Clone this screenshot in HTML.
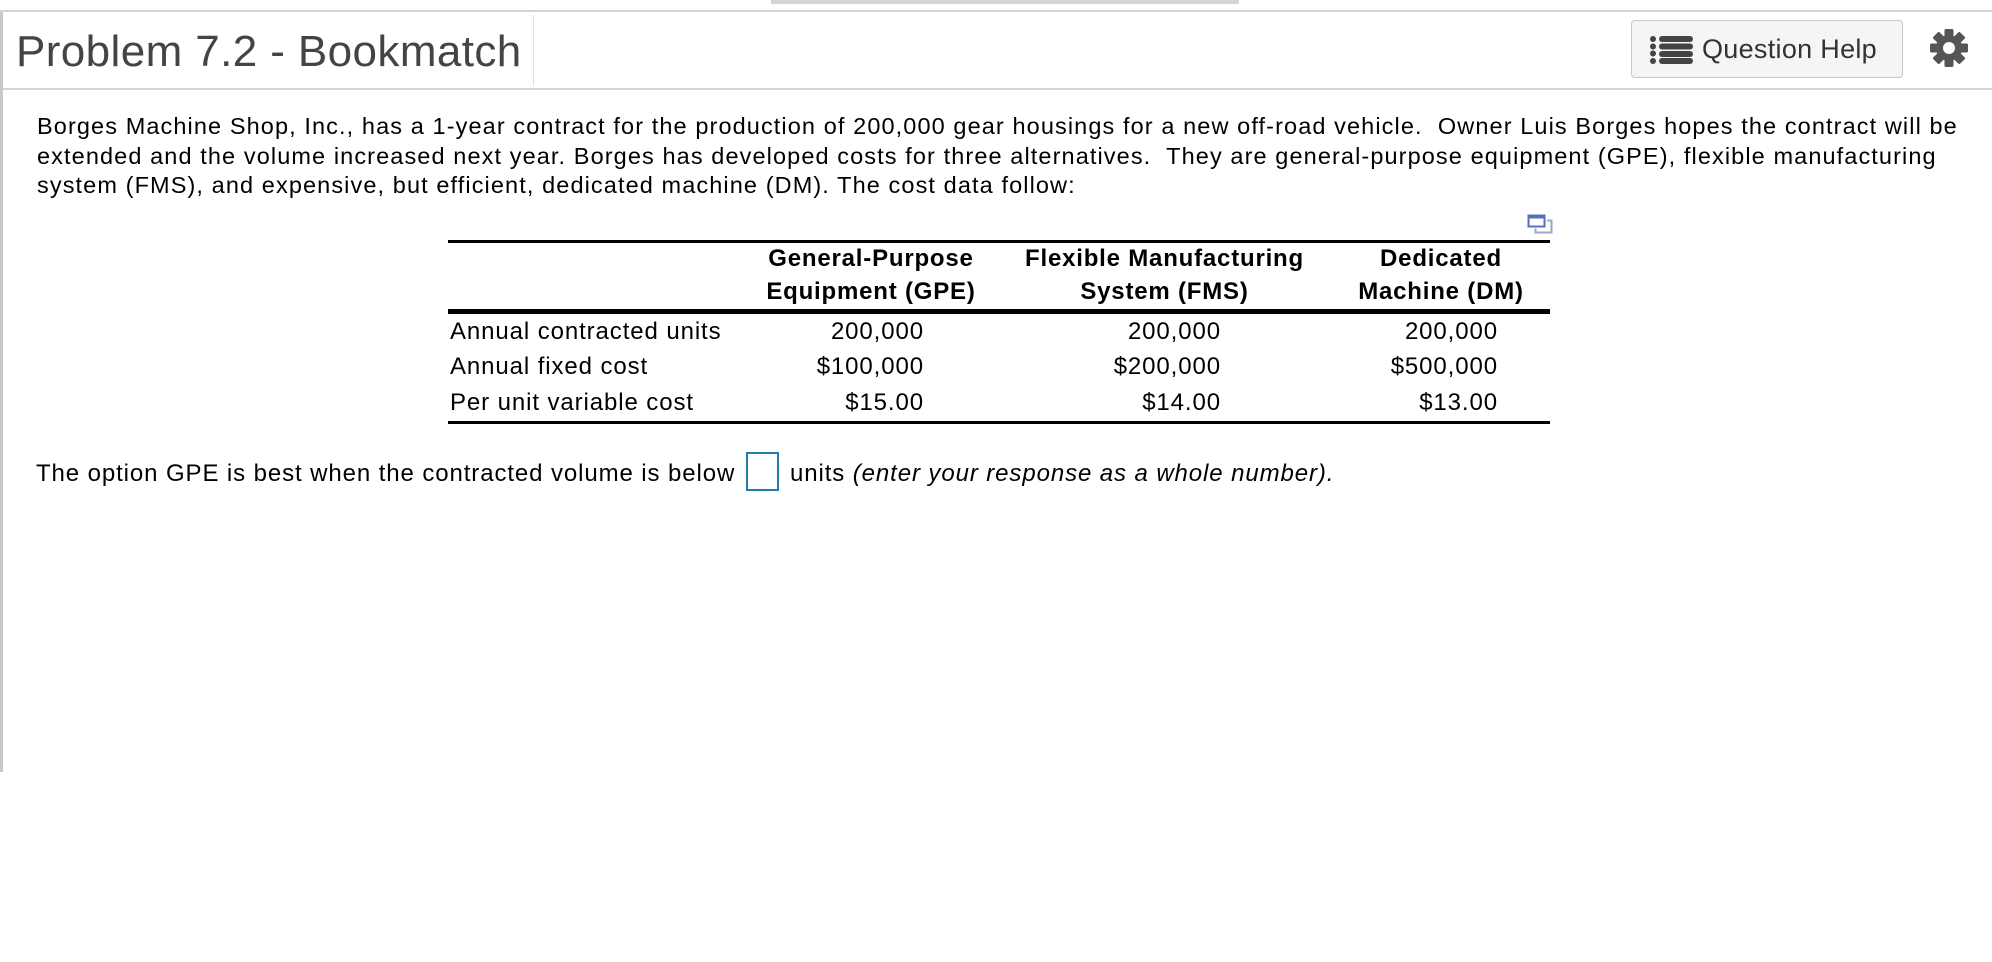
<!DOCTYPE html>
<html><head><meta charset="utf-8"><style>
html,body{margin:0;padding:0;width:1992px;height:962px;overflow:hidden;background:#fff;font-family:"Liberation Sans",Arial,sans-serif;}
.a{position:absolute;white-space:nowrap;}
.line{position:absolute;background:#000;}
.t{font-size:24px;color:#000;line-height:28px;letter-spacing:0.9px;}
.b{font-weight:bold;letter-spacing:0.8px;}
</style></head><body>
<div class="a" style="left:771px;top:0;width:468px;height:4px;background:#d4d4d4"></div>
<div class="a" style="left:0;top:10px;width:1992px;height:2px;background:#d0d3dd"></div>
<div class="a" style="left:0;top:88px;width:1992px;height:2px;background:#d0d3dd"></div>
<div class="a" style="left:0;top:12px;width:3px;height:760px;background:#c8c8c8"></div>
<div class="a" style="left:533px;top:15px;width:1px;height:71px;background:#e2e2e2"></div>
<div class="a" style="left:16px;top:24px;font-size:44px;color:#444;line-height:56px;letter-spacing:0.4px">Problem 7.2 - Bookmatch</div>

<div class="a" style="left:1631px;top:20px;width:272px;height:58px;background:#f5f5f5;border:1px solid #c8c8c8;border-radius:4px;box-sizing:border-box"></div>
<svg class="a" style="left:1648px;top:35px" width="48" height="30" viewBox="0 0 48 30">
<g fill="#444"><circle cx="5" cy="4" r="3"/><circle cx="5" cy="11.5" r="3"/><circle cx="5" cy="18.5" r="3"/><circle cx="5" cy="26" r="3"/>
<rect x="11" y="1" width="34" height="6" rx="3"/><rect x="11" y="8.5" width="34" height="6" rx="3"/><rect x="11" y="16" width="34" height="6" rx="3"/><rect x="11" y="23" width="34" height="6" rx="3"/></g></svg>
<div class="a" style="left:1702px;top:33px;font-size:27px;color:#333;line-height:32px;letter-spacing:0.3px">Question Help</div>
<svg class="a" style="left:1929px;top:28px" width="40" height="40" viewBox="-20 -20 40 40">
<g fill="#555"><circle r="13"/>
<rect x="-4.5" y="-19" width="9" height="38" rx="1.5"/>
<rect x="-4.5" y="-19" width="9" height="38" rx="1.5" transform="rotate(45)"/>
<rect x="-4.5" y="-19" width="9" height="38" rx="1.5" transform="rotate(90)"/>
<rect x="-4.5" y="-19" width="9" height="38" rx="1.5" transform="rotate(135)"/></g>
<circle r="6" fill="#fff"/></svg>

<div class="a t" style="left:37px;top:112px;line-height:29.5px;font-size:23.5px;letter-spacing:1.1px">Borges Machine Shop, Inc., has a 1-year contract for the production of 200,000 gear housings for a new off-road vehicle.&nbsp; Owner Luis Borges hopes the contract will be<br>extended and the volume increased next year. Borges has developed costs for three alternatives.&nbsp; They are general-purpose equipment (GPE), flexible manufacturing<br>system (FMS), and expensive, but efficient, dedicated machine (DM). The cost data follow:</div>

<svg class="a" style="left:1527px;top:214px" width="26" height="20" viewBox="0 0 26 20">
<rect x="1.5" y="1.5" width="16" height="11" fill="#fff" stroke="#5a6fb8" stroke-width="2"/><rect x="1.5" y="1.5" width="16" height="3" fill="#5a6fb8"/>
<path d="M20 6.5h4.5v12h-16v-4" fill="none" stroke="#9aa6cf" stroke-width="2"/></svg>

<div class="line" style="left:448px;top:240px;width:1102px;height:3px"></div>
<div class="line" style="left:448px;top:309px;width:1102px;height:5px"></div>
<div class="line" style="left:448px;top:421px;width:1102px;height:3px"></div>

<div class="a t b" style="left:766px;top:245px;width:210px;text-align:center">General-Purpose<br><span style="position:relative;top:5px">Equipment (GPE)</span></div>
<div class="a t b" style="left:1019px;top:245px;width:291px;text-align:center">Flexible Manufacturing<br><span style="position:relative;top:5px">System (FMS)</span></div>
<div class="a t b" style="left:1352px;top:245px;width:178px;text-align:center">Dedicated<br><span style="position:relative;top:5px">Machine (DM)</span></div>

<div class="a t" style="left:450px;top:318px">Annual contracted units</div>
<div class="a t" style="left:450px;top:353px">Annual fixed cost</div>
<div class="a t" style="left:450px;top:389px">Per unit variable cost</div>

<div class="a t" style="left:724px;top:318px;width:200px;text-align:right">200,000<br><span style="position:relative;top:7px">$100,000</span><br><span style="position:relative;top:15px">$15.00</span></div>
<div class="a t" style="left:1021px;top:318px;width:200px;text-align:right">200,000<br><span style="position:relative;top:7px">$200,000</span><br><span style="position:relative;top:15px">$14.00</span></div>
<div class="a t" style="left:1298px;top:318px;width:200px;text-align:right">200,000<br><span style="position:relative;top:7px">$500,000</span><br><span style="position:relative;top:15px">$13.00</span></div>

<div class="a t" style="left:36px;top:460px">The option GPE is best when the contracted volume is below</div>
<div class="a" style="left:746px;top:452px;width:33px;height:39px;border:2px solid #1f7ea6;box-sizing:border-box"></div>
<div class="a t" style="left:790px;top:460px">units <i>(enter your response as a whole number).</i></div>
</body></html>
